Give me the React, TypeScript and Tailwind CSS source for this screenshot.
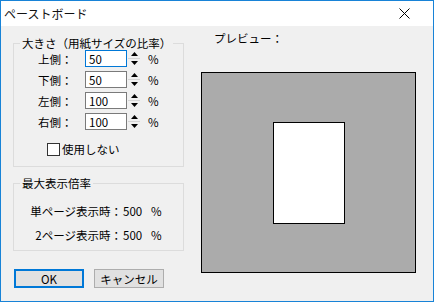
import React from "react";

const FONT = { fontFamily: '"Noto Sans CJK JP", "Noto Sans", sans-serif' };

const SIDES = [
  { label: "上側：", value: "50", focused: true },
  { label: "下側：", value: "50", focused: false },
  { label: "左側：", value: "100", focused: false },
  { label: "右側：", value: "100", focused: false },
];

const Spinner = () => (
  <div className="ml-[1px] flex h-[17px] w-[12px] flex-col">
    <div className="flex h-[8px] items-center justify-center bg-[#f0f0f0]">
      <svg width="7" height="4" viewBox="0 0 7 4">
        <path d="M3.5 0 L7 4 L0 4 Z" fill="#000" />
      </svg>
    </div>
    <div className="h-[1px] bg-[#d4d4d4]" />
    <div className="flex h-[8px] items-center justify-center bg-[#f0f0f0]">
      <svg width="7" height="4" viewBox="0 0 7 4">
        <path d="M0 0 L7 0 L3.5 4 Z" fill="#000" />
      </svg>
    </div>
  </div>
);

export default function App() {
  return (
    <div
      className="flex h-[302px] w-[434px] flex-col overflow-hidden border border-[#1883d7] text-[11.5px] leading-[14px] text-black"
      style={FONT}
    >
      {/* title bar */}
      <div className="flex h-[25px] shrink-0 items-center justify-between bg-white pl-[3px] pr-[23px]">
        <span className="text-[12px] text-[#111]">ペーストボード</span>
        <svg width="11" height="11" viewBox="0 0 11 11">
          <path d="M0.5 0.5 L10.5 10.5 M10.5 0.5 L0.5 10.5" stroke="#000" strokeWidth="1" />
        </svg>
      </div>

      <div className="flex flex-1 bg-[#f0f0f0] px-[12px]">
        {/* left column */}
        <div className="flex w-[171px] shrink-0 flex-col pt-[10px]">
          <fieldset className="border border-[#dcdcdc] pb-[10px]">
            <legend className="ml-[6px] whitespace-nowrap px-[2px]">大きさ（用紙サイズの比率）</legend>
            <div className="flex flex-col gap-[4px] pl-[24px]">
              {SIDES.map((s) => (
                <div key={s.label} className="flex h-[17px] items-center">
                  <span className="w-[47px]">{s.label}</span>
                  <div
                    className={`flex h-[17px] w-[42px] items-center bg-white pl-[3px] ${
                      s.focused ? "border border-[#0078d7]" : "border border-[#7a7a7a]"
                    }`}
                  >
                    {s.value}
                  </div>
                  <Spinner />
                  <span className="ml-[8px]">%</span>
                </div>
              ))}
            </div>
            <div className="mt-[12px] flex items-center pl-[33px]">
              <div className="h-[13px] w-[13px] border border-[#333] bg-white" />
              <span className="ml-[2px]">使用しない</span>
            </div>
          </fieldset>

          <fieldset className="mt-[9px] border border-[#dcdcdc] pb-[8px] pt-[14px]">
            <legend className="ml-[6px] whitespace-nowrap px-[2px]">最大表示倍率</legend>
            <div className="flex flex-col gap-[10px]">
              <div className="flex h-[14px] items-center">
                <span className="w-[108px] whitespace-nowrap text-right">単ページ表示時：</span>
                <span className="ml-[1px] w-[28px]">500</span>
                <span>%</span>
              </div>
              <div className="flex h-[14px] items-center">
                <span className="w-[108px] whitespace-nowrap text-right">2ページ表示時：</span>
                <span className="ml-[1px] w-[28px]">500</span>
                <span>%</span>
              </div>
            </div>
          </fieldset>

          <div className="mt-[18px] flex gap-[10px] pl-[1px]">
            <button className="flex h-[19px] w-[70px] items-center justify-center border-2 border-[#0078d7] bg-[#e1e1e1]">
              OK
            </button>
            <button className="flex h-[19px] w-[70px] items-center justify-center border border-[#adadad] bg-[#e1e1e1]">
              キャンセル
            </button>
          </div>
        </div>

        {/* right column */}
        <div className="ml-[17px] flex flex-col">
          <div className="mt-[5px] pl-[13px]">プレビュー：</div>
          <div className="mt-[27px] flex h-[201px] w-[215px] items-center justify-center border border-black bg-[#ababab]">
            <div className="h-[102px] w-[72px] border border-black bg-white" />
          </div>
        </div>
      </div>
    </div>
  );
}
